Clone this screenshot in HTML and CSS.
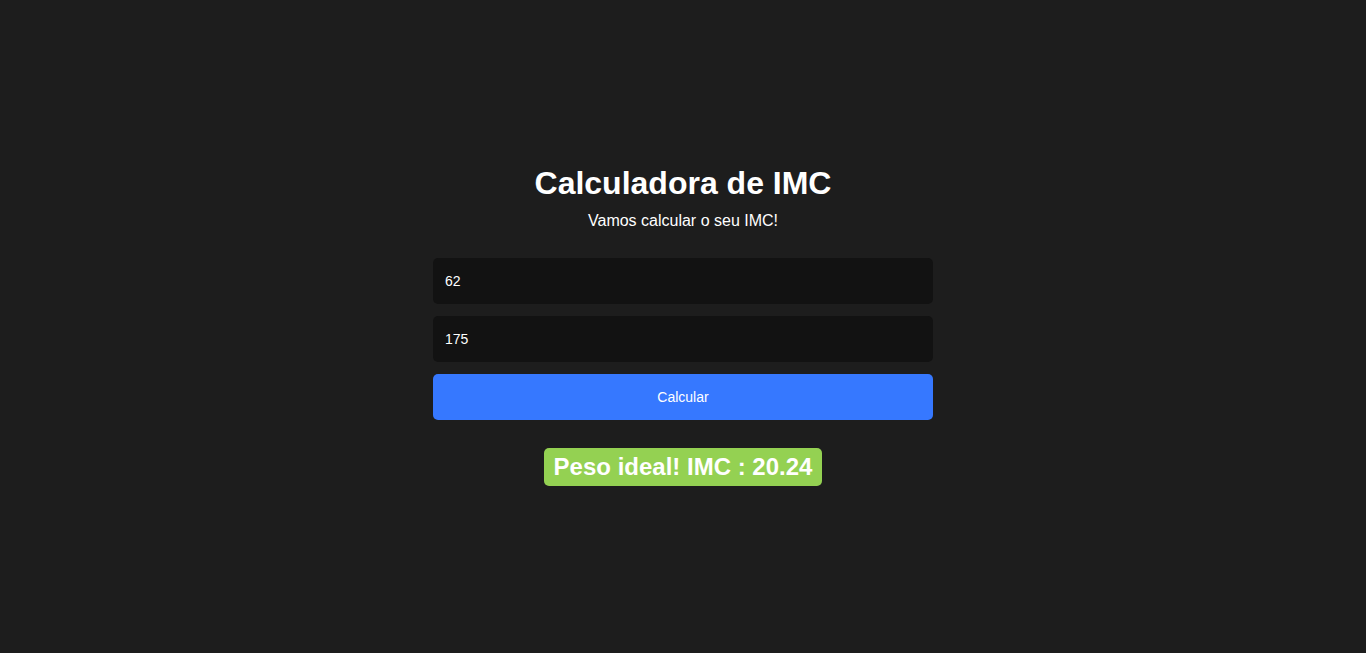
FILE: index.html
```html
<!DOCTYPE html>
<html lang="pt-BR">
<head>
<meta charset="utf-8">
<title>Calculadora de IMC</title>
<link rel="stylesheet" href="styles.css">
</head>
<body>
<main class="app">
  <h1 class="title">Calculadora de IMC</h1>
  <p class="subtitle">Vamos calcular o seu IMC!</p>
  <form class="form">
    <input class="field" type="text" value="62">
    <input class="field" type="text" value="175">
    <button class="btn" type="button">Calcular</button>
  </form>
  <div class="result">Peso ideal! IMC : 20.24</div>
</main>
</body>
</html>
```
FILE: styles.css
```css
* { box-sizing: border-box; }
html, body { margin: 0; padding: 0; }
body {
  background: #1d1d1d;
  color: #ffffff;
  font-family: "Liberation Sans", Arial, sans-serif;
  height: 100vh;
  display: flex;
  align-items: center;
  justify-content: center;
}
.app {
  width: 500px;
  display: flex;
  flex-direction: column;
  align-items: center;
  margin-bottom: 3px;
}
.title {
  margin: 0;
  font-size: 32px;
  font-weight: bold;
  line-height: normal;
}
.subtitle {
  margin: 10px 0 0;
  font-size: 16px;
  line-height: normal;
}
.form {
  width: 100%;
  margin-top: 28px;
  display: flex;
  flex-direction: column;
  gap: 12px;
}
.field {
  width: 100%;
  height: 46px;
  border: none;
  border-radius: 5px;
  background: #121212;
  color: #ffffff;
  font-family: "Liberation Sans", Arial, sans-serif;
  font-size: 14px;
  padding: 0 12px;
  outline: none;
}
.btn {
  width: 100%;
  height: 46px;
  border: none;
  border-radius: 5px;
  background: #3678ff;
  color: #ffffff;
  font-family: "Liberation Sans", Arial, sans-serif;
  font-size: 14px;
}
.result {
  margin-top: 28px;
  background: #94d152;
  color: #ffffff;
  font-size: 24px;
  font-weight: bold;
  line-height: normal;
  padding: 5px 10px;
  border-radius: 5px;
}
```
